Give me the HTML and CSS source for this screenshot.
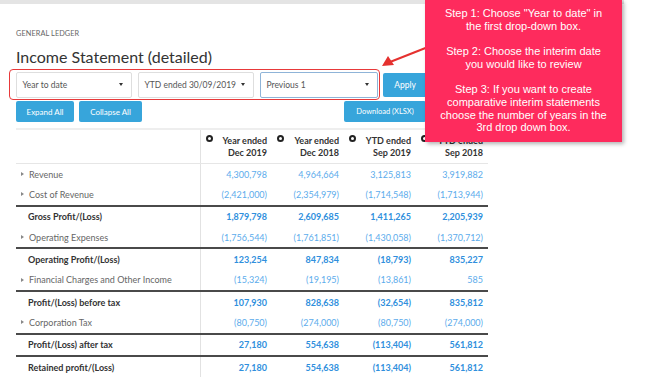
FILE: index.html
```html
<!DOCTYPE html>
<html lang="en">
<head>
  <meta charset="UTF-8">
  <title>Income Statement (detailed)</title>
  <link rel="stylesheet" href="styles.css">
</head>
<body>
  <div class="top-strip"></div>

  <div class="page">
    <div class="breadcrumb">GENERAL LEDGER</div>
    <h1 class="page-title">Income Statement (detailed)</h1>

    <div class="filter-row">
      <div class="highlight">
        <div class="select"><span>Year to date</span><span class="caret"></span></div>
        <div class="select"><span>YTD ended 30/09/2019</span><span class="caret"></span></div>
        <div class="select focused"><span>Previous 1</span><span class="caret"></span></div>
      </div>
      <button class="btn btn-apply">Apply</button>
    </div>

    <div class="action-row">
      <div class="btn-group">
        <button class="btn">Expand All</button>
        <button class="btn">Collapse All</button>
      </div>
      <button class="btn btn-download">Download (XLSX)</button>
    </div>

    <div class="statement">
      <div class="row head">
        <div class="cell label"></div>
        <div class="cell num"><span class="col-icon"></span>Year ended<br>Dec 2019</div>
        <div class="cell num"><span class="col-icon"></span>Year ended<br>Dec 2018</div>
        <div class="cell num"><span class="col-icon"></span>YTD ended<br>Sep 2019</div>
        <div class="cell num"><span class="col-icon"></span>YTD ended<br>Sep 2018</div>
      </div>

      <div class="row">
        <div class="cell label"><span class="tri"></span>Revenue</div>
        <div class="cell num">4,300,798</div>
        <div class="cell num">4,964,664</div>
        <div class="cell num">3,125,813</div>
        <div class="cell num">3,919,882</div>
      </div>
      <div class="row">
        <div class="cell label"><span class="tri"></span>Cost of Revenue</div>
        <div class="cell num">(2,421,000)</div>
        <div class="cell num">(2,354,979)</div>
        <div class="cell num">(1,714,548)</div>
        <div class="cell num">(1,713,944)</div>
      </div>

      <div class="row total">
        <div class="cell label">Gross Profit/(Loss)</div>
        <div class="cell num">1,879,798</div>
        <div class="cell num">2,609,685</div>
        <div class="cell num">1,411,265</div>
        <div class="cell num">2,205,939</div>
      </div>
      <div class="row">
        <div class="cell label"><span class="tri"></span>Operating Expenses</div>
        <div class="cell num">(1,756,544)</div>
        <div class="cell num">(1,761,851)</div>
        <div class="cell num">(1,430,058)</div>
        <div class="cell num">(1,370,712)</div>
      </div>

      <div class="row total">
        <div class="cell label">Operating Profit/(Loss)</div>
        <div class="cell num">123,254</div>
        <div class="cell num">847,834</div>
        <div class="cell num">(18,793)</div>
        <div class="cell num">835,227</div>
      </div>
      <div class="row">
        <div class="cell label"><span class="tri"></span>Financial Charges and Other Income</div>
        <div class="cell num">(15,324)</div>
        <div class="cell num">(19,195)</div>
        <div class="cell num">(13,861)</div>
        <div class="cell num">585</div>
      </div>

      <div class="row total">
        <div class="cell label">Profit/(Loss) before tax</div>
        <div class="cell num">107,930</div>
        <div class="cell num">828,638</div>
        <div class="cell num">(32,654)</div>
        <div class="cell num">835,812</div>
      </div>
      <div class="row">
        <div class="cell label"><span class="tri"></span>Corporation Tax</div>
        <div class="cell num">(80,750)</div>
        <div class="cell num">(274,000)</div>
        <div class="cell num">(80,750)</div>
        <div class="cell num">(274,000)</div>
      </div>

      <div class="row total">
        <div class="cell label">Profit/(Loss) after tax</div>
        <div class="cell num">27,180</div>
        <div class="cell num">554,638</div>
        <div class="cell num">(113,404)</div>
        <div class="cell num">561,812</div>
      </div>
      <div class="row total">
        <div class="cell label">Retained profit/(Loss)</div>
        <div class="cell num">27,180</div>
        <div class="cell num">554,638</div>
        <div class="cell num">(113,404)</div>
        <div class="cell num">561,812</div>
      </div>
    </div>
  </div>

  <!-- annotation overlay -->
  <svg class="pointer" width="50" height="24" viewBox="0 0 50 24">
    <line x1="48" y1="2" x2="10" y2="17" stroke="#e5312f" stroke-width="2"/>
    <polygon points="2,21 8,11 14,20" fill="#e5312f"/>
  </svg>
  <div class="callout">
    <p>Step 1: Choose "Year to date" in<br>the first drop-down box.</p>
    <p>Step 2: Choose the interim date<br>you would like to review</p>
    <p>Step 3: If you want to create<br>comparative interim statements<br>choose the number of years in the<br>3rd drop down box.</p>
  </div>
</body>
</html>
```

FILE: styles.css
```css
body {
  margin: 0;
  font-family: Lato, "Noto Sans", sans-serif;
  background: white;
  color: #333;
  position: relative;
  width: 660px;
  height: 384px;
  overflow: hidden;
}
.top-strip {
  width: 624px;
  height: 4px;
  background: #e4e4e4;
}
.page {
  padding: 0 16px;
}
.breadcrumb {
  margin-top: 25px;
  font-size: 7.3px;
  line-height: 9px;
  color: #666;
  letter-spacing: 0.1px;
}
.page-title {
  margin: 9px 0 0 0;
  font-size: 16px;
  font-weight: normal;
  color: #333;
  line-height: 20px;
}
.filter-row {
  display: flex;
  align-items: center;
  margin-top: 2px;
}
.highlight {
  display: flex;
  gap: 6px;
  margin-left: -7px;
  padding: 1.5px 1.5px 1.5px 5.5px;
  border: 1.5px solid #e8393a;
  border-radius: 4px;
}
.select {
  width: 116px;
  height: 26px;
  box-sizing: border-box;
  border: 1px solid #dedede;
  border-radius: 2px;
  background: white;
  display: flex;
  align-items: center;
  justify-content: space-between;
  padding: 0 8px 0 6px;
  font-size: 8.5px;
  color: #555;
  white-space: nowrap;
}
.select.focused {
  width: 118px;
  border-color: #8fb4d8;
}
.caret {
  width: 0;
  height: 0;
  border-left: 2.5px solid transparent;
  border-right: 2.5px solid transparent;
  border-top: 3px solid #333;
}
.btn {
  height: 21px;
  padding: 0;
  border: none;
  border-radius: 2px;
  background: #37a5db;
  color: white;
  font-family: Lato, "Noto Sans", sans-serif;
  font-size: 8px;
  white-space: nowrap;
  cursor: pointer;
}
.btn-apply {
  height: 24px;
  width: 44px;
  margin-left: 3px;
  font-size: 8.5px;
}
.action-row {
  width: 410px;
  display: flex;
  justify-content: space-between;
  margin-top: 1px;
}
.btn-group {
  display: flex;
  gap: 5px;
}
.btn-group .btn:first-child {
  width: 58px;
}
.btn-group .btn:last-child {
  width: 63px;
}
.btn-download {
  width: 82px;
  font-size: 7.5px;
}
.statement {
  width: 472px;
  margin-top: 6px;
  border-top: 2px solid #eeeeee;
}
.row {
  display: grid;
  grid-template-columns: 184px 72px 72px 72px 72px;
  height: 20.33px;
  align-items: center;
  font-size: 9px;
}
.row.head {
  height: 33px;
  align-items: start;
  border-bottom: 1px solid #e6e6e6;
  font-weight: bold;
  color: #333;
  line-height: 12px;
}
.row.total {
  border-top: 2px solid #4a4a4a;
}
.cell {
  height: 100%;
  display: flex;
  align-items: center;
  box-sizing: border-box;
}
.cell.label {
  padding-left: 5px;
  color: #666;
  white-space: nowrap;
}
.cell.num {
  justify-content: flex-end;
  padding-right: 5px;
  color: #5cacec;
}
.row .cell.label + .cell.num {
  border-left: 1px solid #e2e2e2;
}
.row.head .cell {
  align-items: flex-start;
}
.row.head .cell.num {
  color: #333;
  text-align: right;
  padding-top: 5px;
  position: relative;
}
.col-icon {
  position: absolute;
  left: 5px;
  top: 5px;
  width: 7px;
  height: 7px;
  box-sizing: border-box;
  border-radius: 50%;
  border: 2px solid #222;
  background: white;
}
.tri {
  width: 0;
  height: 0;
  border-top: 2px solid transparent;
  border-bottom: 2px solid transparent;
  border-left: 3px solid #888;
  margin-right: 5px;
}
.row.total .cell.label {
  padding-left: 12px;
  color: #333;
  font-weight: bold;
}
.row.total .cell.num {
  color: #2f8fdd;
  font-weight: bold;
}
.pointer {
  position: absolute;
  left: 380px;
  top: 45px;
}
.callout {
  position: absolute;
  left: 425px;
  top: 0;
  width: 197px;
  height: 142px;
  box-sizing: border-box;
  padding-top: 7px;
  background: #fe2b5d;
  box-shadow: 2px 2px 4px rgba(0, 0, 0, 0.3);
  color: white;
  font-family: "Liberation Sans", Arial, sans-serif;
  font-size: 11px;
  line-height: 12.7px;
  text-align: center;
}
.callout p {
  margin: 0 0 12.7px 0;
}
```
